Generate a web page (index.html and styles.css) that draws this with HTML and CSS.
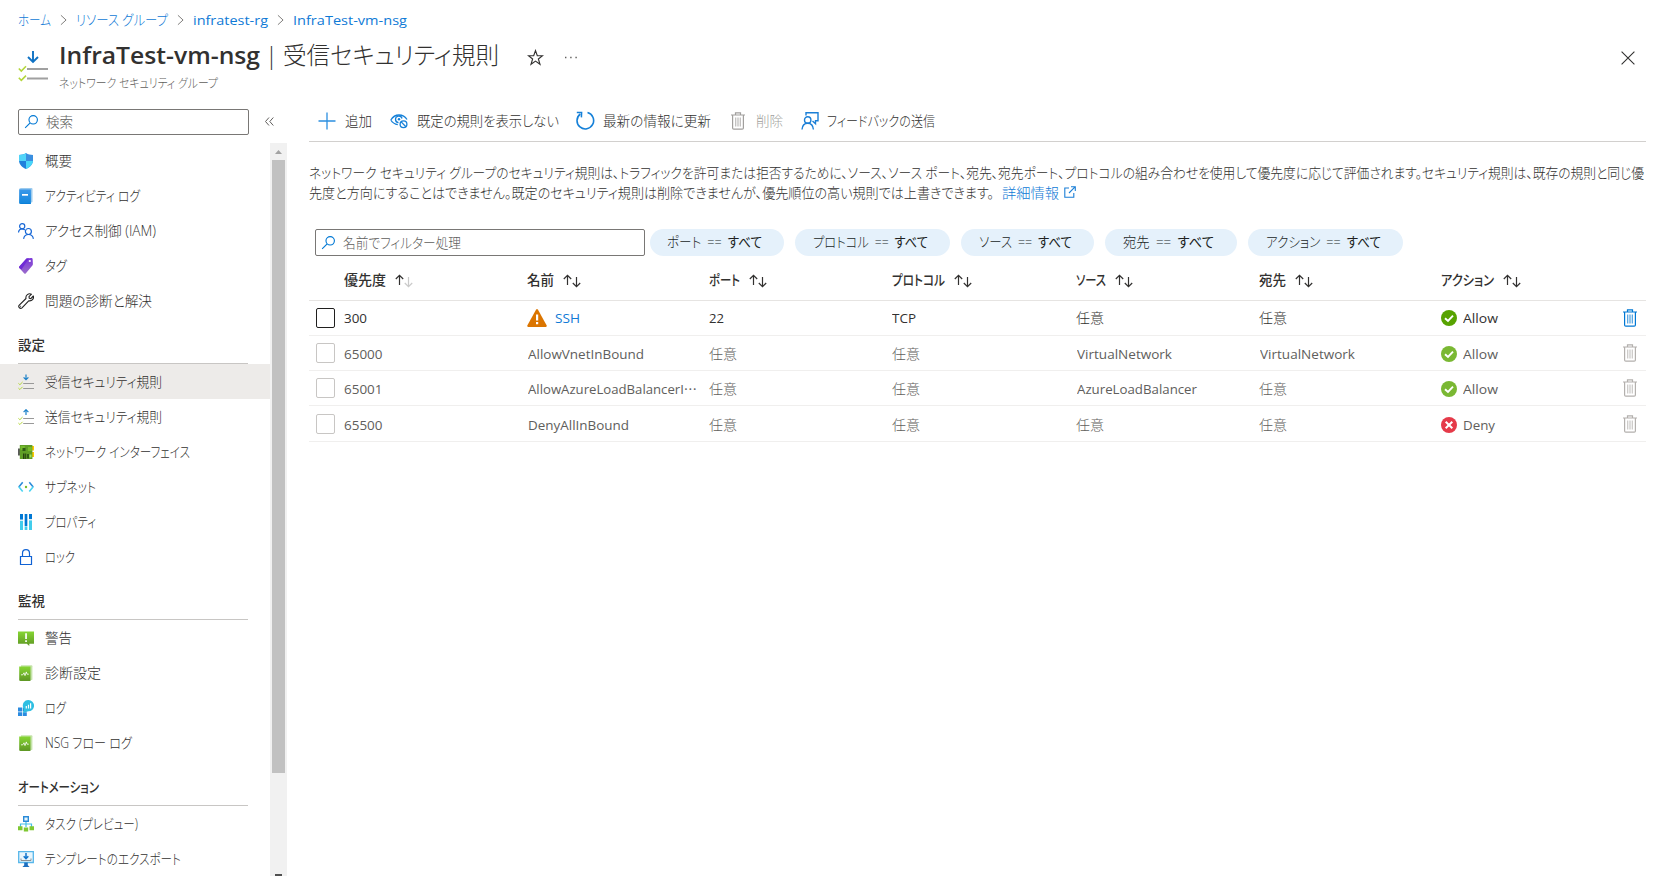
FILE: index.html
```
<!DOCTYPE html>
<html lang="ja">
<head>
<meta charset="utf-8">
<title>InfraTest-vm-nsg | 受信セキュリティ規則</title>
<link rel="stylesheet" href="styles.css">
</head>
<body>
<svg class="defs" width="0" height="0">
  <defs>
    <linearGradient id="gGreen" x1="0" y1="0" x2="0" y2="1"><stop offset="0" stop-color="#86d633"/><stop offset="1" stop-color="#5e9624"/></linearGradient>
    <linearGradient id="gBlue" x1="0" y1="0" x2="0" y2="1"><stop offset="0" stop-color="#5ea0ef"/><stop offset="1" stop-color="#0078d4"/></linearGradient>
    <linearGradient id="gPurple" x1="0" y1="0" x2="0" y2="1"><stop offset="0" stop-color="#7a35d8"/><stop offset="1" stop-color="#9a6ccb"/></linearGradient>
    <symbol id="chev" viewBox="0 0 8 14"><path d="M1 1.500l6 5.500-6 5.500" fill="none" stroke="#7a7876" stroke-width="1.100"/></symbol>
    <symbol id="search" viewBox="0 0 16 16"><path d="M6.300 9.700L1.200 14.800" fill="none" stroke="#0078d4" stroke-width="1.200"/><circle cx="9.800" cy="6.200" r="4.500" fill="none" stroke="#0078d4" stroke-width="1.200"/></symbol>
    <symbol id="inbound" viewBox="0 0 16 16"><path d="M8 .5v5M5.600 3.300L8 5.700l2.400-2.400" fill="none" stroke="#1b80c8" stroke-width="1.200"/><path d="M5.200 9.500H16M5.200 14.500H16" stroke="#999" stroke-width="1.100"/><path d="M.4 9.300l1.500 1.400L4.600 8M.4 14.100l1.500 1.400 2.700-2.700" fill="none" stroke="#b4d63a" stroke-width="1"/></symbol>
    <symbol id="outbound" viewBox="0 0 16 16"><path d="M8 6V.8M5.600 3.100L8 .7l2.400 2.400" fill="none" stroke="#1b80c8" stroke-width="1.200"/><path d="M5.200 9.500H16M5.200 14.500H16" stroke="#999" stroke-width="1.100"/><path d="M.4 9.300l1.500 1.400L4.600 8M.4 14.100l1.500 1.400 2.700-2.700" fill="none" stroke="#b4d63a" stroke-width="1"/></symbol>
    <symbol id="shield" viewBox="0 0 16 16"><path d="M8 0c2 1.500 4.500 1.900 7 1.900v5.500c0 4.500-4 7.200-7 8.600z" fill="#3a8fe0"/><path d="M8 0C6 1.500 3.500 1.900 1 1.900v5.500C1 11.900 5 14.600 8 16z" fill="#1f80dc"/><path d="M1 1.900C3.500 1.900 6 1.500 8 0v8H1z" fill="#50d4f8"/><path d="M8 8h7c-.4 4-4.300 6.700-7 8z" fill="#48d6f8"/></symbol>
    <symbol id="book" viewBox="0 0 16 16"><path d="M3 0h10.500q1 0 1 1v12.500q0 1-1 1H13V16H2.500Q1 16 1 14.500V2Q1 0 3 0z" fill="#9ccbee"/><path d="M1.500 1.500H12.800V16H2.700Q1.300 16 1.300 14.600z" fill="url(#gBlue)"/><path d="M1.300 1.500h11.500v14H1.300z" fill="#1f91e4" opacity=".55"/><path d="M4 6h6v1.700H4z" fill="#fff"/></symbol>
    <symbol id="iam" viewBox="0 0 16 16"><g fill="none" stroke="#1767d6" stroke-width="1.200"><circle cx="4.200" cy="3.200" r="2.600"/><path d="M.5 9.500C.8 7 2.200 5.800 4 5.800q1.700 0 2.800 1.200"/><circle cx="10.400" cy="8.500" r="3"/><path d="M5.600 15.900c.4-2.900 2.300-4.400 4.900-4.400s4.500 1.500 4.900 4.400"/></g></symbol>
    <symbol id="tag" viewBox="0 0 16 16"><path d="M8.500.5l5-.5q1 0 1.100 1l.3 5q0 1-.7 1.700L7.700 15.500q-.7.600-1.400 0L1.300 10q-.6-.8 0-1.500z" fill="url(#gPurple)"/><path d="M8.500.5L11 .3 3.500 11.500 1.300 10q-.6-.8 0-1.500z" fill="#6f2bd6"/><circle cx="11.800" cy="3" r="1.100" fill="#fff"/></symbol>
    <symbol id="wrench" viewBox="0 0 16 16"><path d="M13.500 1.200L11 3.700l.3 1.600 1.500.3 2.500-2.600c.8 2.700-1.300 5.500-4.600 4.800L4 14.800c-1.700 1.600-4.300-.8-2.700-2.600L8 5.500C7.300 2.300 10.500-.1 13.500 1.200z" fill="none" stroke="#222" stroke-width="1.100" stroke-linejoin="round"/><path d="M2.600 13.300h.1" stroke="#222" stroke-width="1" stroke-linecap="round"/></symbol>
    <symbol id="nic" viewBox="0 0 16 16"><path d="M0 4.500h2v7H0z" fill="#5a5a5a"/><path d="M13.500 2H16v4.500h-2zM13.500 8H16v5h-2z" fill="#ffca00"/><path d="M1.800 1h12.600v14H1.800z" fill="#5f9e26"/><path d="M2.600 2h4.200v4H2.600zM10 3h3.800v4H10z" fill="#76bc2d"/><path d="M4.500 4h3v3h-3zM9 10h2v4.500H9z" fill="#2f5a15"/><path d="M5 9.500h1.500V15H5zM7.200 9.500h1V15h-1z" fill="#27420f"/><path d="M11.500 10.500h2v3h-2z" fill="#a5e05e"/></symbol>
    <symbol id="subnet" viewBox="0 0 16 16"><path d="M4.700 3.300L.8 8M11.300 3.300L15.200 8" fill="none" stroke="#2b8bd8" stroke-width="1.600"/><path d="M.8 7.700l3.900 4.800M15.200 7.700l-3.900 4.800" fill="none" stroke="#4bd4f2" stroke-width="1.600"/><circle cx="8" cy="8" r="1.200" fill="#76bc2d"/></symbol>
    <symbol id="props" viewBox="0 0 16 16"><path d="M2 0h3v16H2zM6.700 0h2.600v16H6.700zM11 0h3v16h-3z" fill="#d5eff9"/><path d="M2 0h3v5.500H2zM6.700 0h2.600v12H6.700zM11 0h3v5h-3z" fill="#0078d4"/><path d="M2 7h3v9H2zM6.700 12.500h2.600V16H6.700zM11 6.500h3V16h-3z" fill="#42cdec"/></symbol>
    <symbol id="lock" viewBox="0 0 16 16"><path d="M2.500 7.500h11v8h-11zM4.500 7.500V4.200q0-3.600 3.500-3.600t3.500 3.600v3.300" fill="none" stroke="#1062d4" stroke-width="1.200"/></symbol>
    <symbol id="alert" viewBox="0 0 16 16"><path d="M0 1.500h16v12.300h-4.700v2.200l-2.500-2.200H0z" fill="url(#gGreen)"/><path d="M7.200 3.300h1.700v5.800H7.200zM7.200 10.300h1.700V12H7.200z" fill="#fff"/></symbol>
    <symbol id="diag" viewBox="0 0 16 16"><path d="M3 .3h10.500q.9 0 .9.900v13q0 .9-.9.900H3z" fill="#c5e3aa"/><path d="M1.200 1.500h11.300V16H2.500q-1.300 0-1.300-1.300z" fill="url(#gGreen)"/><path d="M3 9.800h1.800L6 7.800l1 2.800 1.300-3.700.8 2.300h1.700" fill="none" stroke="#fff" stroke-width=".8"/></symbol>
    <symbol id="logs" viewBox="0 0 16 16"><path d="M0 7.500h4v4H0zM0 12.200h4V16H0zM4.700 12.200h4.100V16H4.700z" fill="#2b8be0"/><path d="M4.700 7.500h4.100v4H4.700z" fill="#1671c8"/><path d="M10.400 0a5.400 5.400 0 1 1 0 11.300Q7.500 11.800 5 13.500q.9-3.500.2-6A5.500 5.500 0 0 1 10.400 0z" fill="#2fbfe2"/><path d="M7.700 6h1.200v2.500H7.700zM9.900 4.800h1.200v3.700H9.900zM12 3.200h1.200v5.300H12z" fill="#fff"/></symbol>
    <symbol id="tasks" viewBox="0 0 16 16"><path d="M8 5v6M2.500 11V8h11v3" fill="none" stroke="#45bfe6" stroke-width="1.200"/><path d="M5.700.8h4.600v4.400H5.700z" fill="#e6f6fd" stroke="#2b8bd8" stroke-width="1.400"/><path d="M0 10.300h4.500v4H0zM5.800 11.500h4.400v4H5.800zM11.500 10.300H16v4h-4.500z" fill="#7fc832"/></symbol>
    <symbol id="export" viewBox="0 0 16 16"><path d="M.7.700h14.600v10.800H.7z" fill="#e8f6fd" stroke="#56b6ea" stroke-width="1.300"/><path d="M8 2v5.500M5.700 5.300L8 7.700l2.300-2.400" fill="none" stroke="#0f74cc" stroke-width="1.500"/><path d="M3 7.500v2h10v-2" fill="none" stroke="#8a8f94" stroke-width="1"/><path d="M6.200 11.500h3.600v2.700l1.800 1.800H4.400l1.800-1.800z" fill="#1c6fc0"/></symbol>
    <symbol id="plus" viewBox="0 0 18 18"><path d="M9 .5v17M.5 9h17" stroke="#2b8fe0" stroke-width="1.300"/></symbol>
    <symbol id="eye" viewBox="0 0 18 18"><g fill="none" stroke="#1580d8" stroke-width="1.300"><path d="M.8 8C3 4.300 6 3 9 3s6 1.300 8 4.500M.8 8c1.700 2.700 3.900 4.200 7 4.700"/><path d="M8.500 10.600A3.300 3.300 0 1 1 12 6.500"/><circle cx="13.500" cy="12.300" r="3.400"/><path d="M11.200 9.900l4.700 4.800"/></g><circle cx="9" cy="7.200" r="1.200" fill="#1580d8"/></symbol>
    <symbol id="refresh" viewBox="0 0 20 20"><path d="M12.500 1.600A8.300 8.300 0 1 1 5.300 3" fill="none" stroke="#1580d8" stroke-width="1.600"/><path d="M1.800 1.500l4.800-.1-.2 5" fill="none" stroke="#1580d8" stroke-width="1.500"/></symbol>
    <symbol id="trash" viewBox="0 0 14 18"><path d="M0 3h14M4.500 3V.8h5V3M1.600 3v13q0 1.200 1.200 1.200h8.400q1.200 0 1.200-1.200V3" fill="none" stroke="currentColor" stroke-width="1.200"/><path d="M4.700 5.500v9M7 5.500v9M9.300 5.500v9" stroke="currentColor" stroke-width="1.200" opacity=".7"/></symbol>
    <symbol id="feedback" viewBox="0 0 18 18"><g fill="none" stroke="#1b7fd6" stroke-width="1.400"><path d="M5 3.500V.8h12v8h-2.500v3l-3-2.700"/><circle cx="6.700" cy="7.900" r="3.200"/><path d="M1 17.500c.3-4 2.500-6.300 5.700-6.300s5.400 2.300 5.700 6.300"/></g></symbol>
    <symbol id="ext" viewBox="0 0 12 12"><path d="M5 2H.8v9.200h9V7M7 .7h4.300V5M11.300.7L5 7" fill="none" stroke="#1b7fd6" stroke-width="1.100"/></symbol>
    <symbol id="up" viewBox="0 0 9 12"><path d="M4.500 11V1.500M.8 5l3.700-3.700L8.200 5" fill="none" stroke="currentColor" stroke-width="1.200"/></symbol>
    <symbol id="down" viewBox="0 0 9 12"><path d="M4.500 1v9.500M.8 7l3.700 3.700L8.200 7" fill="none" stroke="currentColor" stroke-width="1.200"/></symbol>
    <symbol id="warn" viewBox="0 0 20 18"><path d="M9 .7q1-1.200 2 0L19.700 16.500q.4 1.200-.8 1.500H1.100q-1.200-.3-.8-1.500z" fill="#db7500"/><path d="M9 5.500h2.200v6H9zM9 13h2.200v2.200H9z" fill="#fff"/></symbol>
    <symbol id="ok" viewBox="0 0 16 16"><circle cx="8" cy="8" r="8" fill="currentColor"/><path d="M4 8.200L7 11l5-5.400" fill="none" stroke="#fff" stroke-width="1.900"/></symbol>
    <symbol id="deny" viewBox="0 0 16 16"><circle cx="8" cy="8" r="8" fill="#e53a49"/><path d="M4.700 4.700l6.600 6.600M11.300 4.700l-6.600 6.600" stroke="#fff" stroke-width="2"/></symbol>
  </defs>
</svg>

<nav class="crumbs">
  <a><span data-w="33">ホーム</span></a><svg class="chev"><use href="#chev"/></svg>
  <a><span data-w="92">リソース グループ</span></a><svg class="chev"><use href="#chev"/></svg>
  <a class="lat"><span data-w="75">infratest-rg</span></a><svg class="chev"><use href="#chev"/></svg>
  <a class="lat"><span data-w="114">InfraTest-vm-nsg</span></a>
</nav>

<header class="head">
  <svg class="head-icon" viewBox="0 0 30 32"><path d="M15 1v10.500M10 7l5 5 5-5" fill="none" stroke="#0f72c4" stroke-width="1.900"/><path d="M9 19H30M9 28.500H30" stroke="#a0a0a0" stroke-width="1.900"/><path d="M.8 18.500l2.500 2.500L8 16.300M.8 27.800l2.500 2.500L8 25.600" fill="none" stroke="#b4d63a" stroke-width="1.600"/></svg>
  <div class="head-text">
    <h1><b data-w="201">InfraTest-vm-nsg</b><i>|</i><span data-w="216">受信セキュリティ規則</span></h1>
    <p><span data-w="159">ネットワーク セキュリティ グループ</span></p>
  </div>
  <svg class="star" viewBox="0 0 16 16"><path d="M8 1.500l1.700 4.700 5 .1-4 3.100 1.500 4.900L8 11.400l-4.200 2.900 1.500-4.900-4-3.100 5-.1z" fill="none" stroke="#323130" stroke-width="1.100"/></svg>
  <svg class="dots" viewBox="0 0 14 4"><path d="M1 1.500h1.400M6.200 1.500h1.400M11.400 1.500h1.400" stroke="#605e5c" stroke-width="1.400"/></svg>
  <svg class="close" viewBox="0 0 14 14"><path d="M.6.6l12.800 12.800M13.400.6L.6 13.400" stroke="#323130" stroke-width="1.100"/></svg>
</header>

<div class="body">
  <aside class="side">
    <div class="side-top">
      <div class="box side-search"><svg class="i15"><use href="#search"/></svg><span data-w="27">検索</span></div>
      <svg class="collapse" viewBox="0 0 9 9"><path d="M4 .5l-3.500 4 3.500 4M8.300.5l-3.500 4 3.500 4" fill="none" stroke="#605e5c" stroke-width="1"/></svg>
    </div>
    <div class="side-scroll">
      <ul class="menu">
        <li><svg><use href="#shield"/></svg><span data-w="27">概要</span></li>
        <li><svg><use href="#book"/></svg><span data-w="95">アクティビティ ログ</span></li>
        <li><svg><use href="#iam"/></svg><span data-w="111">アクセス制御 (IAM)</span></li>
        <li><svg><use href="#tag"/></svg><span data-w="22">タグ</span></li>
        <li><svg><use href="#wrench"/></svg><span data-w="107">問題の診断と解決</span></li>
        <li class="group"><span data-w="27">設定</span></li>
        <li class="on"><svg><use href="#inbound"/></svg><span data-w="117">受信セキュリティ規則</span></li>
        <li><svg><use href="#outbound"/></svg><span data-w="117">送信セキュリティ規則</span></li>
        <li><svg><use href="#nic"/></svg><span data-w="145">ネットワーク インターフェイス</span></li>
        <li><svg><use href="#subnet"/></svg><span data-w="51">サブネット</span></li>
        <li><svg><use href="#props"/></svg><span data-w="51">プロパティ</span></li>
        <li><svg><use href="#lock"/></svg><span data-w="30">ロック</span></li>
        <li class="group"><span data-w="27">監視</span></li>
        <li><svg><use href="#alert"/></svg><span data-w="27">警告</span></li>
        <li><svg><use href="#diag"/></svg><span data-w="56">診断設定</span></li>
        <li><svg><use href="#logs"/></svg><span data-w="21">ログ</span></li>
        <li><svg><use href="#diag"/></svg><span data-w="87">NSG フロー ログ</span></li>
        <li class="group"><span data-w="81">オートメーション</span></li>
        <li><svg><use href="#tasks"/></svg><span data-w="93">タスク (プレビュー)</span></li>
        <li><svg><use href="#export"/></svg><span data-w="136">テンプレートのエクスポート</span></li>
      </ul>
      <div class="bar">
        <svg class="arrow" viewBox="0 0 17 17"><path d="M5 11l3.500-4 3.500 4z" fill="#a3a3a3"/></svg>
        <div class="thumb"></div>
        <div class="arrow-end"></div>
      </div>
    </div>
  </aside>

  <main class="main">
    <div class="tools">
      <div class="tool t1"><svg class="i18"><use href="#plus"/></svg><span data-w="27">追加</span></div>
      <div class="tool t2"><svg class="i18"><use href="#eye"/></svg><span data-w="142">既定の規則を表示しない</span></div>
      <div class="tool t3"><svg class="i20"><use href="#refresh"/></svg><span data-w="108">最新の情報に更新</span></div>
      <div class="tool t4"><svg class="bin"><use href="#trash"/></svg><span data-w="27">削除</span></div>
      <div class="tool t5"><svg class="i18"><use href="#feedback"/></svg><span data-w="108">フィードバックの送信</span></div>
    </div>
    <div class="note">
      <div><span data-w="1335">ネットワーク セキュリティ グループのセキュリティ規則は、トラフィックを許可または拒否するために、ソース、ソース ポート、宛先、宛先ポート、プロトコルの組み合わせを使用して優先度に応じて評価されます。セキュリティ規則は、既存の規則と同じ優</span></div>
      <div><span data-w="685">先度と方向にすることはできません。既定のセキュリティ規則は削除できませんが、優先順位の高い規則では上書きできます。</span><a><span data-w="57">詳細情報</span><svg class="ext"><use href="#ext"/></svg></a></div>
    </div>
    <div class="filters">
      <div class="box filter"><svg class="i15"><use href="#search"/></svg><span data-w="118">名前でフィルター処理</span></div>
      <div class="pill p1"><span data-w="95">ポート == <b>すべて</b></span></div>
      <div class="pill p2"><span data-w="115">プロトコル == <b>すべて</b></span></div>
      <div class="pill p3"><span data-w="93">ソース == <b>すべて</b></span></div>
      <div class="pill p4"><span data-w="91">宛先 == <b>すべて</b></span></div>
      <div class="pill p5"><span data-w="115">アクション == <b>すべて</b></span></div>
    </div>

    <div class="grid">
      <div class="row top">
        <div></div>
        <div><span data-w="42">優先度</span><svg class="sort"><use href="#up"/></svg><svg class="sort dn faint"><use href="#down"/></svg></div>
        <div><span data-w="27">名前</span><svg class="sort"><use href="#up"/></svg><svg class="sort dn"><use href="#down"/></svg></div>
        <div><span data-w="31">ポート</span><svg class="sort"><use href="#up"/></svg><svg class="sort dn"><use href="#down"/></svg></div>
        <div><span data-w="53">プロトコル</span><svg class="sort"><use href="#up"/></svg><svg class="sort dn"><use href="#down"/></svg></div>
        <div><span data-w="30">ソース</span><svg class="sort"><use href="#up"/></svg><svg class="sort dn"><use href="#down"/></svg></div>
        <div><span data-w="27">宛先</span><svg class="sort"><use href="#up"/></svg><svg class="sort dn"><use href="#down"/></svg></div>
        <div><span data-w="53">アクション</span><svg class="sort"><use href="#up"/></svg><svg class="sort dn"><use href="#down"/></svg></div>
        <div></div>
      </div>
      <div class="row live">
        <div><i class="check"></i></div>
        <div class="lat"><span data-w="23">300</span></div>
        <div class="lat"><svg class="warn"><use href="#warn"/></svg><a><span data-w="25">SSH</span></a></div>
        <div class="lat"><span data-w="15">22</span></div>
        <div class="lat"><span data-w="24">TCP</span></div>
        <div><span data-w="28">任意</span></div>
        <div><span data-w="28">任意</span></div>
        <div class="lat"><svg class="state"><use href="#ok"/></svg><span data-w="35">Allow</span></div>
        <div><svg class="bin"><use href="#trash"/></svg></div>
      </div>
      <div class="row">
        <div><i class="check"></i></div>
        <div class="lat"><span data-w="38.500">65000</span></div>
        <div class="lat nm"><span data-w="116">AllowVnetInBound</span></div>
        <div><span data-w="28">任意</span></div>
        <div><span data-w="28">任意</span></div>
        <div class="lat nm"><span data-w="95">VirtualNetwork</span></div>
        <div class="lat nm"><span data-w="95">VirtualNetwork</span></div>
        <div class="lat"><svg class="state"><use href="#ok"/></svg><span data-w="35">Allow</span></div>
        <div><svg class="bin"><use href="#trash"/></svg></div>
      </div>
      <div class="row">
        <div><i class="check"></i></div>
        <div class="lat"><span data-w="38.500">65001</span></div>
        <div class="lat nm"><span data-w="169">AllowAzureLoadBalancerI<em>⋯</em></span></div>
        <div><span data-w="28">任意</span></div>
        <div><span data-w="28">任意</span></div>
        <div class="lat nm"><span data-w="120">AzureLoadBalancer</span></div>
        <div><span data-w="28">任意</span></div>
        <div class="lat"><svg class="state"><use href="#ok"/></svg><span data-w="35">Allow</span></div>
        <div><svg class="bin"><use href="#trash"/></svg></div>
      </div>
      <div class="row last">
        <div><i class="check"></i></div>
        <div class="lat"><span data-w="38.500">65500</span></div>
        <div class="lat nm"><span data-w="101">DenyAllInBound</span></div>
        <div><span data-w="28">任意</span></div>
        <div><span data-w="28">任意</span></div>
        <div><span data-w="28">任意</span></div>
        <div><span data-w="28">任意</span></div>
        <div class="lat"><svg class="state"><use href="#deny"/></svg><span data-w="32">Deny</span></div>
        <div><svg class="bin"><use href="#trash"/></svg></div>
      </div>
    </div>
  </main>
</div>
<script src="labels.js"></script>
</body>
</html>
```
FILE: styles.css
```
* { box-sizing: border-box; }
body {
  margin: 0;
  width: 1655px;
  height: 876px;
  overflow: hidden;
  background: #fff;
  color: #323130;
  font-family: "Open Sans", "Noto Sans CJK JP", sans-serif;
  font-size: 14px;
  font-weight: 300;
  line-height: 20px;
  font-feature-settings: "palt";
  white-space: nowrap;
}
svg { display: block; flex: none; }
.defs { position: absolute; }
a { color: #0f7ad6; display: flex; align-items: center; }
.lat { font-size: 13.2px; font-weight: 400; }
[data-w] { display: inline-block; transform-origin: 0 50%; flex: none; }

/* breadcrumb */
.crumbs { display: flex; align-items: center; height: 40px; padding: 0 0 0 17.5px; }
.chev { width: 7px; height: 12px; margin: 0 9px; }

/* title */
.head { display: flex; height: 63px; padding-left: 18px; }
.head-icon { width: 30px; height: 32px; margin-top: 10px; overflow: visible; }
.head-text { margin: -1px 0 0 11px; }
h1 { margin: 0; font-size: 24px; line-height: 32px; font-weight: 300; display: flex; }
h1 b { font-weight: 600; }
h1 i { font-style: normal; width: 23px; text-align: center; }
.head-text p { margin: 2.5px 0 0; font-size: 12.5px; color: #605e5c; }
.star { width: 17px; height: 17px; margin: 9px 0 0 28px; }
.dots { width: 14px; height: 4px; margin: 16px 0 0 20px; }
.close { width: 14px; height: 14px; margin: 11px 20px 0 auto; }

.body { display: flex; height: 773px; }
.box { display: flex; align-items: center; border: 1px solid #797775; border-radius: 2px; color: #605e5c; }
.i15 { width: 15px; height: 15px; }
.i18 { width: 18px; height: 18px; }
.i20 { width: 20px; height: 20px; }

/* side menu */
.side { width: 287px; }
.side-top { display: flex; align-items: center; height: 40px; padding: 0 0 3px 18px; }
.side-search { width: 231px; height: 26px; padding-left: 5px; gap: 7px; }
.collapse { width: 9px; height: 9px; margin-left: 16px; }
.side-scroll { display: flex; height: 733px; }
.menu { list-style: none; margin: 0; padding: 0; width: 270px; }
.menu li { display: flex; align-items: center; height: 35px; padding: 0 0 0 18px; }
.menu svg { width: 16px; height: 16px; margin-right: 11px; margin-top: 1px; }
.menu .on { background: #edebe9; }
.menu .group {
  height: 46px;
  margin: 0 22px 0 18px;
  padding: 8px 0 0;
  border-bottom: 1px solid #c8c6c4;
  font-weight: 500;
}
.bar { width: 17px; background: #f1f1f1; overflow: hidden; }
.arrow { width: 17px; height: 17px; }
.thumb { width: 13px; height: 613px; margin-left: 2px; background: #c1c1c1; }
.arrow-end { width: 7px; height: 2px; margin: 101px 0 0 5px; background: #505050; }

/* command bar */
.main { width: 1337px; margin-left: 22px; }
.tools { display: flex; align-items: center; height: 39px; padding: 0 0 3px 9px; border-bottom: 1px solid #d2d0ce; }
.tool { display: flex; align-items: center; }
.t1 { gap: 9px; }
.t2 { gap: 9px; margin-left: 18px; }
.t3 { gap: 8px; margin-left: 16px; }
.t4 { gap: 11px; margin-left: 20px; color: #a19f9d; }
.t5 { gap: 8px; margin-left: 18px; }
.bin { width: 14px; height: 18px; }

.note { padding-top: 21px; line-height: 19.500px; }
.note > div { display: flex; }
.note a { margin-left: 8px; gap: 5px; }
.ext { width: 12px; height: 12px; }

/* filters */
.filters { display: flex; height: 27px; margin: 27px 0 0 6px; }
.filter { width: 330px; padding-left: 5px; gap: 7px; }
.pill { display: flex; align-items: center; padding: 0 0 1px 18px; border-radius: 14px; background: #e5f1fb; color: #201f1e; word-spacing: 3px; }
.pill b { font-weight: 400; }
.p1 { width: 134px; margin-left: 5px; padding-left: 17px; }
.p2 { width: 155px; margin-left: 11px; }
.p3 { width: 133px; margin-left: 11px; }
.p4 { width: 132px; margin-left: 11px; }
.p5 { width: 155px; margin-left: 11px; }

/* rules */
.row {
  display: grid;
  grid-template-columns: 35px 183px 182px 183px 184px 183px 182px 182px 23px;
  height: 35px;
  border-bottom: 1px solid #f0efee;
  color: #605e5c;
}
.row > div { display: flex; align-items: center; padding-top: 2px; }
.row > div.nm { padding-left: 1px; }
.row > div:first-child { padding: 0 0 0 7px; }
.row > div:last-child { padding: 0; color: #b3b0ad; }
.row.last { height: 36px; }
.row.top { height: 45px; color: #323130; font-weight: 500; border-color: #e6e4e2; }
.row.top > div { padding-top: 3px; }
.row.live { color: #323130; }
.row.live > div { padding-top: 0; }
.row.live > div:last-child { color: #0078d4; }
.sort { width: 9px; height: 12px; margin-left: 9px; }
.sort.dn { margin: 4px 0 0 0; }
.faint { opacity: .25; }
.check { width: 19px; height: 20px; border: 1px solid #c8c6c4; border-radius: 2px; }
.live .check { border-color: #201f1e; }
.warn { width: 20px; height: 18px; margin-right: 8px; }
.state { width: 16px; height: 16px; margin-right: 6px; color: #7ab833; }
.live .state { color: #57a300; }
em { font-style: normal; }
```
FILE: labels.js
```
// Condense each label to the advance width given in data-w.
document.querySelectorAll('[data-w]').forEach(function (el) {
  var target = parseFloat(el.dataset.w);
  var natural = el.getBoundingClientRect().width;
  el.style.transform = 'scaleX(' + target / natural + ')';
  el.style.marginRight = target - natural + 'px';
});
```
